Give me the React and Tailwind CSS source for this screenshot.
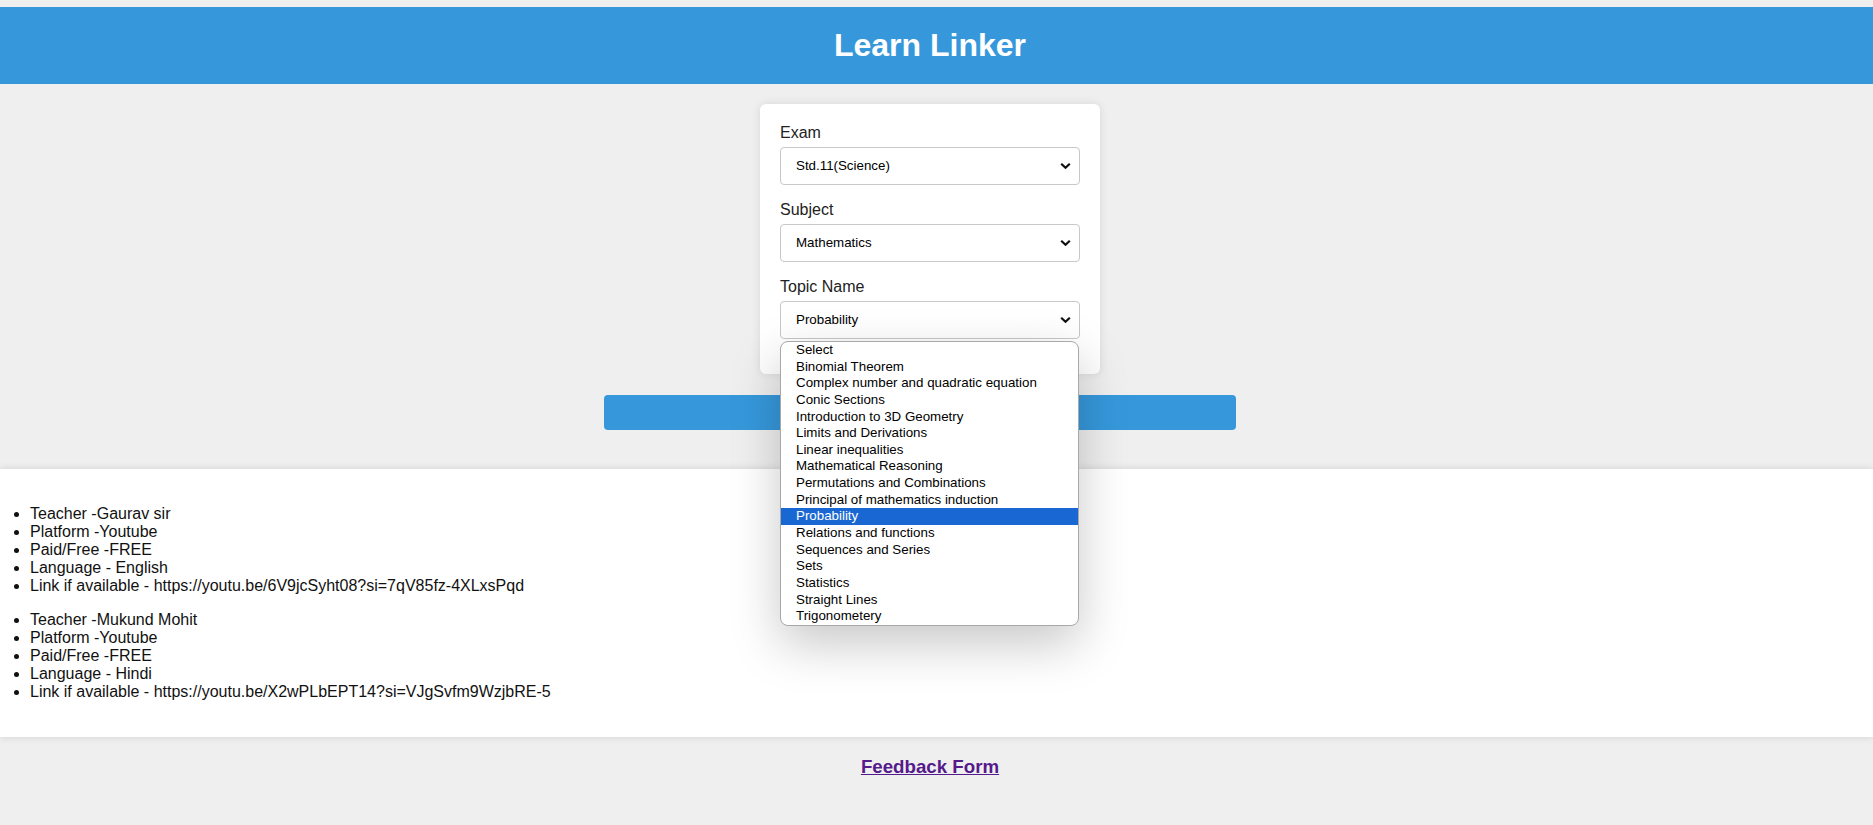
import React from "react";

const topics = [
  "Select",
  "Binomial Theorem",
  "Complex number and quadratic equation",
  "Conic Sections",
  "Introduction to 3D Geometry",
  "Limits and Derivations",
  "Linear inequalities",
  "Mathematical Reasoning",
  "Permutations and Combinations",
  "Principal of mathematics induction",
  "Probability",
  "Relations and functions",
  "Sequences and Series",
  "Sets",
  "Statistics",
  "Straight Lines",
  "Trigonometery",
];

const results = [
  {
    teacher: "Gaurav sir",
    lang: "English",
    link: "https://youtu.be/6V9jcSyht08?si=7qV85fz-4XLxsPqd",
  },
  {
    teacher: "Mukund Mohit",
    lang: "Hindi",
    link: "https://youtu.be/X2wPLbEPT14?si=VJgSvfm9WzjbRE-5",
  },
];

function Chevron() {
  return (
    <svg width="11" height="7" viewBox="0 0 11 7" className="absolute right-[8px] top-1/2 -translate-y-1/2">
      <path d="M1.2 1.2 L5.5 5.3 L9.8 1.2" fill="none" stroke="#111" strokeWidth="2.2" />
    </svg>
  );
}

function FakeSelect({ value, last }) {
  return (
    <div
      className={`relative h-[38px] w-full rounded-[4px] border border-[#c8c8c8] bg-white pl-[15px] flex items-center text-[13.33px] text-black leading-[16px] ${
        last ? "mb-[15px]" : "mb-[16px]"
      }`}
    >
      {value}
      <Chevron />
    </div>
  );
}

export default function App() {
  return (
    <div
      className="min-h-[825px] bg-[#efefef] text-black leading-[18px] pt-[7px]"
      style={{ fontFamily: '"Liberation Sans", Arial, sans-serif' }}
    >
      <header className="bg-[#3698db] h-[77px] flex items-center justify-center pr-[13px]">
        <h1 className="text-white text-[32px] font-bold leading-[37px]">Learn Linker</h1>
      </header>

      <div className="relative pr-[13px] pt-[20px]">
        <div className="mx-auto w-[340px] rounded-[6px] bg-white px-[20px] pt-[20px] pb-[20px] shadow-[0_0_10px_rgba(0,0,0,0.1)]">
          <label className="block text-[16px] leading-[18px] mb-[5px] text-[#222]">Exam</label>
          <FakeSelect value="Std.11(Science)" />
          <label className="block text-[16px] leading-[18px] mb-[5px] text-[#222]">Subject</label>
          <FakeSelect value="Mathematics" />
          <label className="block text-[16px] leading-[18px] mb-[5px] text-[#222]">Topic Name</label>
          <FakeSelect value="Probability" last />
        </div>

        <div className="mt-[21px] ml-[604px] w-[632px] h-[35px] rounded-[4px] bg-[#3698db]" />

        {/* opened native dropdown popup */}
        <div className="absolute left-[780px] top-[257px] z-20 w-[299px] rounded-[8px] border border-[#a8a8a8] bg-white overflow-hidden shadow-[0_18px_50px_rgba(0,0,0,0.22)] text-[13.33px] text-black">
          {topics.map((t) => (
            <div
              key={t}
              className={`h-[16.65px] leading-[16.65px] pl-[15px] whitespace-nowrap ${
                t === "Probability" ? "bg-[#1967d2] text-white" : ""
              }`}
            >
              {t}
            </div>
          ))}
        </div>
      </div>

      <section className="mt-[39px] bg-white pt-[20px] pb-[20px] shadow-[0_0_8px_rgba(0,0,0,0.12)] text-[16px] leading-[18px] text-[#111]">
        {results.map((r) => (
          <ul key={r.teacher} className="list-disc pl-[30px] my-[16px]">
            <li>Teacher -{r.teacher}</li>
            <li>Platform -Youtube</li>
            <li>Paid/Free -FREE</li>
            <li>Language - {r.lang}</li>
            <li>Link if available - {r.link}</li>
          </ul>
        ))}
      </section>

      <h3 className="mt-[19px] pr-[13px] text-center text-[18.72px] font-bold leading-[22px]">
        <a href="#" className="text-[#551a8b] underline">
          Feedback Form
        </a>
      </h3>
    </div>
  );
}
